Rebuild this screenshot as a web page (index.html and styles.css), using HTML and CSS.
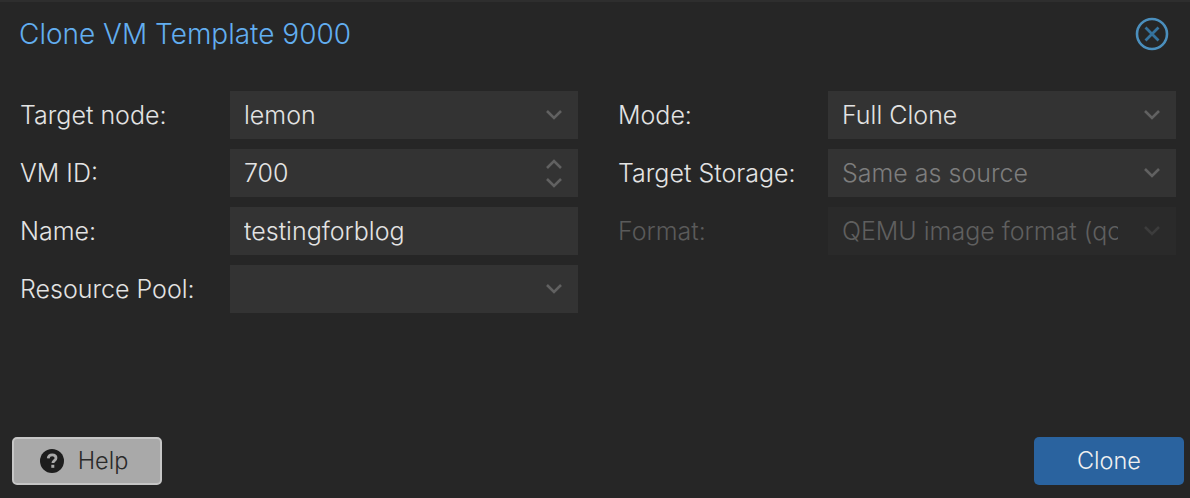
FILE: index.html
```html
<!DOCTYPE html>
<html lang="en">
<head>
    <meta charset="UTF-8">
    <title>Clone VM Template 9000</title>
    <link rel="stylesheet" href="styles.css">
</head>
<body>

<div class="dialog">
    <div class="dialog-header">
        <h2>Clone VM Template 9000</h2>
        <svg class="close-icon" width="34" height="34" viewBox="0 0 34 34" fill="none">
            <circle cx="17" cy="17" r="15" stroke="#4b8fbd" stroke-width="2.6"/>
            <path d="M10.5 10.5 L23.5 23.5 M23.5 10.5 L10.5 23.5" stroke="#35739e" stroke-width="2.8"/>
        </svg>
    </div>

    <form class="form-columns">
        <div class="form-column">
            <div class="form-group">
                <label>Target node:</label>
                <div class="field">
                    <span class="value">lemon</span>
                    <svg class="arrow" width="18" height="12" viewBox="0 0 18 12"><path d="M2 2 L9 9 L16 2"/></svg>
                </div>
            </div>
            <div class="form-group">
                <label>VM ID:</label>
                <div class="field">
                    <span class="value">700</span>
                    <div class="spinner">
                        <svg class="arrow" width="18" height="12" viewBox="0 0 18 12"><path d="M2 10 L9 3 L16 10"/></svg>
                        <svg class="arrow" width="18" height="12" viewBox="0 0 18 12"><path d="M2 2 L9 9 L16 2"/></svg>
                    </div>
                </div>
            </div>
            <div class="form-group">
                <label>Name:</label>
                <div class="field">
                    <span class="value">testingforblog</span>
                </div>
            </div>
            <div class="form-group">
                <label>Resource Pool:</label>
                <div class="field">
                    <span class="value"></span>
                    <svg class="arrow" width="18" height="12" viewBox="0 0 18 12"><path d="M2 2 L9 9 L16 2"/></svg>
                </div>
            </div>
        </div>

        <div class="form-column">
            <div class="form-group">
                <label>Mode:</label>
                <div class="field">
                    <span class="value">Full Clone</span>
                    <svg class="arrow" width="18" height="12" viewBox="0 0 18 12"><path d="M2 2 L9 9 L16 2"/></svg>
                </div>
            </div>
            <div class="form-group">
                <label>Target Storage:</label>
                <div class="field">
                    <span class="value placeholder">Same as source</span>
                    <svg class="arrow" width="18" height="12" viewBox="0 0 18 12"><path d="M2 2 L9 9 L16 2"/></svg>
                </div>
            </div>
            <div class="form-group disabled">
                <label>Format:</label>
                <div class="field">
                    <span class="value">QEMU image format (qcow2)</span>
                    <svg class="arrow" width="18" height="12" viewBox="0 0 18 12"><path d="M2 2 L9 9 L16 2"/></svg>
                </div>
            </div>
        </div>
    </form>

    <div class="dialog-footer">
        <button type="button" class="btn-help">
            <svg width="24" height="24" viewBox="0 0 24 24">
                <circle cx="12" cy="12" r="12" fill="#1d1d1d"/>
                <path d="M8.2 9.4 C8.4 7 10 5.8 12.2 5.8 C14.4 5.8 16 7.1 16 9 C16 11.6 12.9 11.7 12.9 14" fill="none" stroke="#a9a9a9" stroke-width="2.8"/>
                <rect x="11.3" y="15.8" width="3" height="3" fill="#a9a9a9"/>
            </svg>
            <span>Help</span>
        </button>
        <button type="button" class="btn-clone"><span>Clone</span></button>
    </div>
</div>

</body>
</html>
```

FILE: styles.css
```css
* {
    box-sizing: border-box;
}
body {
    margin: 0;
    background-color: #262626;
    font-family: Inter, "Liberation Sans", sans-serif;
    font-weight: 300;
    font-size: 25px;
    color: #e3e3e3;
}
.dialog {
    display: flex;
    flex-direction: column;
    width: 1190px;
    height: 498px;
    border-top: 2px solid #2e2e2e;
}

/* Header */
.dialog-header {
    display: flex;
    justify-content: space-between;
    align-items: center;
    height: 64px;
    padding: 0 21px 0 19px;
}
.dialog-header h2 {
    margin: 0;
    font-size: 28px;
    font-weight: 300;
    color: #62aef0;
}

/* Form */
.form-columns {
    display: flex;
    gap: 40px;
    padding: 25px 14px 0 20px;
    flex: 1;
}
.form-column {
    display: flex;
    flex-direction: column;
    gap: 10px;
    width: 558px;
}
.form-group {
    display: flex;
    align-items: center;
    height: 48px;
}
.form-group label {
    width: 210px;
}
.field {
    display: flex;
    align-items: center;
    justify-content: space-between;
    flex: 1;
    min-width: 0;
    height: 48px;
    padding: 0 15px 0 14px;
    background-color: #333333;
    color: #e3e3e3;
}
.value {
    white-space: nowrap;
    overflow: hidden;
    width: 276px;
}
.placeholder {
    color: #7d7d7d;
}
.arrow {
    display: block;
    fill: none;
    stroke: #616161;
    stroke-width: 2.6;
    flex-shrink: 0;
}
.spinner {
    display: flex;
    flex-direction: column;
    gap: 7px;
}
.disabled label {
    color: #5a5a5a;
}
.disabled .field {
    background-color: #2a2a2a;
}
.disabled .value {
    color: #5f5f5f;
}
.disabled .arrow {
    stroke: #3c3c3c;
}

/* Footer */
.dialog-footer {
    display: flex;
    justify-content: space-between;
    padding: 0 6px 13px 12px;
}
button {
    display: flex;
    align-items: center;
    justify-content: center;
    width: 150px;
    height: 48px;
    border-radius: 5px;
    font-family: inherit;
    font-weight: 300;
    font-size: 23.5px;
}
button span {
    margin-bottom: 2px;
}
.btn-help {
    gap: 14px;
    padding: 0 12px 0 6px;
    background-color: #a9a9a9;
    border: 2px solid #c6c6c6;
    color: #2a2a2a;
}
.btn-clone {
    background-color: #2a639f;
    border: none;
    color: #f0f0f0;
}
```
